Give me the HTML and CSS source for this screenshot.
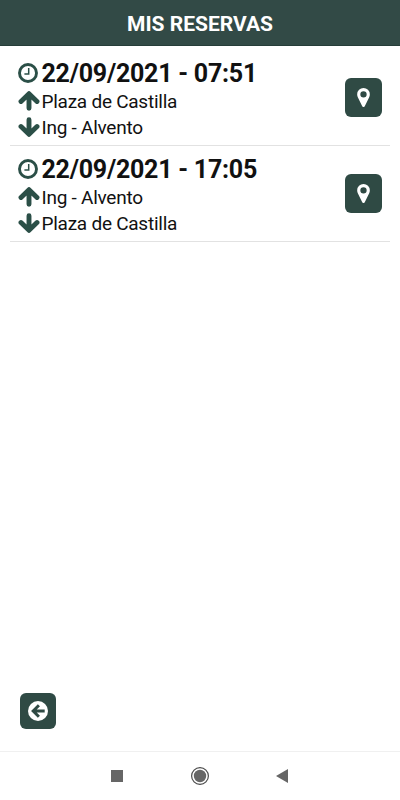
FILE: index.html
```
<!DOCTYPE html>
<html lang="es">
<head>
    <meta charset="UTF-8">
    <meta name="viewport" content="width=device-width, initial-scale=1.0">
    <title>Mis reservas</title>
    <link rel="stylesheet" href="styles.css">
</head>
<body>

<svg class="sprite">
    <symbol id="clock" viewBox="0 0 20 20">
        <circle cx="10" cy="10" r="8.5" fill="none" stroke="currentColor" stroke-width="2.9"/>
        <path d="M10.7 5v5.9H6.4" fill="none" stroke="currentColor" stroke-width="1.5"/>
    </symbol>
    <symbol id="up" viewBox="0 0 22 20">
        <path d="M11 17.3V4M3 10.5l8-7.800 8 7.800" fill="none" stroke="currentColor" stroke-width="4.9" stroke-linecap="round" stroke-linejoin="round"/>
    </symbol>
    <symbol id="down" viewBox="0 0 22 20">
        <path d="M11 2.7V16M3 9.5l8 7.800 8-7.800" fill="none" stroke="currentColor" stroke-width="4.9" stroke-linecap="round" stroke-linejoin="round"/>
    </symbol>
    <symbol id="pin" viewBox="0 0 12 18">
        <path fill="currentColor" fill-rule="evenodd" d="M6 0a6 6 0 0 0-6 6c0 .9.1 1.700.5 2.500l4.300 8.700c.5 1.100 1.900 1.100 2.400 0l4.300-8.700c.4-.8.5-1.600.5-2.500a6 6 0 0 0-6-6zm0 3a3 3 0 1 1 0 6 3 3 0 0 1 0-6z"/>
    </symbol>
</svg>

<header>
    <h1>MIS RESERVAS</h1>
</header>

<main>
    <ul class="bookings">
        <li class="booking">
            <div class="info">
                <div class="line date"><svg class="clock"><use href="#clock"/></svg>22/09/2021 - 07:51</div>
                <div class="line"><svg class="arrow"><use href="#up"/></svg>Plaza de Castilla</div>
                <div class="line"><svg class="arrow"><use href="#down"/></svg>Ing - Alvento</div>
            </div>
            <button class="btn map" aria-label="Ver parada"><svg><use href="#pin"/></svg></button>
        </li>
        <li class="booking">
            <div class="info">
                <div class="line date"><svg class="clock"><use href="#clock"/></svg>22/09/2021 - 17:05</div>
                <div class="line"><svg class="arrow"><use href="#up"/></svg>Ing - Alvento</div>
                <div class="line"><svg class="arrow"><use href="#down"/></svg>Plaza de Castilla</div>
            </div>
            <button class="btn map" aria-label="Ver parada"><svg><use href="#pin"/></svg></button>
        </li>
    </ul>
    <button class="btn back" aria-label="Volver">
        <svg viewBox="0 0 20 20">
            <circle cx="10" cy="10" r="10" fill="#fff"/>
            <path d="M16.7 10H6M10.9 4.3L5.2 10l5.7 5.7" fill="none" stroke="#2f4a44" stroke-width="3"/>
        </svg>
    </button>
</main>

<nav>
    <svg class="square" viewBox="0 0 12 12"><path d="M0 0h12v12H0z" fill="#666"/></svg>
    <svg class="home" viewBox="0 0 18 18">
        <circle cx="9" cy="9" r="8.4" fill="none" stroke="#4c4c4c" stroke-width="1.2"/>
        <circle cx="9" cy="9" r="6.2" fill="#666"/>
    </svg>
    <svg class="prev" viewBox="0 0 12 14"><path d="M0 7L12 0v14z" fill="#666"/></svg>
</nav>

</body>
</html>
```
FILE: styles.css
```
* {
    box-sizing: border-box;
}
body {
    font-family: Roboto, sans-serif;
    margin: 0;
    height: 100vh;
    display: flex;
    flex-direction: column;
    background-color: #fff;
    color: #111;
}
.sprite {
    display: none;
}
header {
    height: 46px;
    padding-top: 2px;
    background-color: #324a46;
    border-bottom: 1px solid #263d39;
    color: white;
    display: flex;
    align-items: center;
    justify-content: center;
}
h1 {
    margin: 0;
    font-size: 21px;
    font-weight: 700;
}
main {
    flex: 1;
    display: flex;
    flex-direction: column;
    justify-content: space-between;
    padding: 4px 10px 22px;
}
.bookings {
    list-style: none;
    margin: 0;
    padding: 0;
}
.booking {
    height: 96px;
    padding: 8px 8px 0 7.5px;
    border-bottom: 1px solid #e2e2e2;
    display: flex;
    justify-content: space-between;
}
.line {
    display: flex;
    align-items: center;
    height: 26px;
    font-size: 19px;
    letter-spacing: -0.25px;
    white-space: nowrap;
}
.date {
    height: 30px;
    font-size: 25px;
    font-weight: 700;
}
.clock {
    width: 20px;
    height: 20px;
    margin-right: 4px;
    color: #2b4f47;
}
.arrow {
    width: 22px;
    height: 20px;
    margin-right: 2px;
    color: #2b4f47;
}
.btn {
    display: flex;
    align-items: center;
    justify-content: center;
    border: 0;
    padding: 0;
    border-radius: 6px;
    background-color: #2f4a44;
    color: white;
}
.map {
    width: 37px;
    height: 39px;
    margin-top: 20px;
}
.map svg {
    width: 13px;
    height: 19px;
}
.back {
    width: 36px;
    height: 36px;
    margin-left: 10px;
}
.back svg {
    width: 20px;
    height: 20px;
}
nav {
    height: 49px;
    border-top: 1px solid #f0f0f0;
    padding: 0 112px 0 111px;
    display: flex;
    align-items: center;
    justify-content: space-between;
}
.square {
    width: 12px;
    height: 12px;
}
.home {
    width: 18px;
    height: 18px;
}
.prev {
    width: 12px;
    height: 14px;
}
```
